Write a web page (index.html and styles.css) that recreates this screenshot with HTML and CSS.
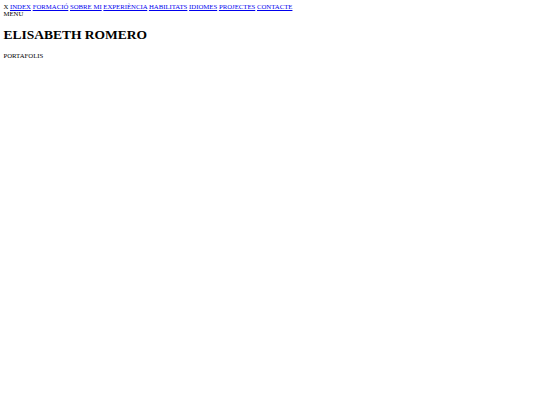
FILE: index.html
```html
<!DOCTYPE html>
<html lang="ca">
<head>
<meta charset="utf-8">
<title>Elisabeth Romero</title>
<link rel="stylesheet" href="styles.css">
</head>
<body class="page">
<header class="top">
  <nav class="nav">
    <span class="close">X</span>
    <a class="link" href="#index">INDEX</a>
    <a class="link" href="#formacio">FORMACIÓ</a>
    <a class="link" href="#sobre">SOBRE MI</a>
    <a class="link" href="#experiencia">EXPERIÈNCIA</a>
    <a class="link" href="#habilitats">HABILITATS</a>
    <a class="link" href="#idiomes">IDIOMES</a>
    <a class="link" href="#projectes">PROJECTES</a>
    <a class="link" href="#contacte">CONTACTE</a>
  </nav>
  <div class="menu">MENU</div>
</header>
<main class="main">
  <h1 class="title">ELISABETH ROMERO</h1>
  <p class="subtitle">PORTAFOLIS</p>
</main>
</body>
</html>
```

FILE: styles.css
```css
html {
  background: #ffffff;
}
.page {
  margin: 3.4px;
  font-family: "Liberation Serif", "Times New Roman", serif;
  font-size: 6.75px;
  color: #000000;
}
.link {
  color: #0000ee;
  text-decoration: underline;
}
.title {
  font-size: 13.5px;
  font-weight: bold;
  margin: 10px 0 9.05px;
}
.subtitle {
  margin: 6.75px 0;
}
```
